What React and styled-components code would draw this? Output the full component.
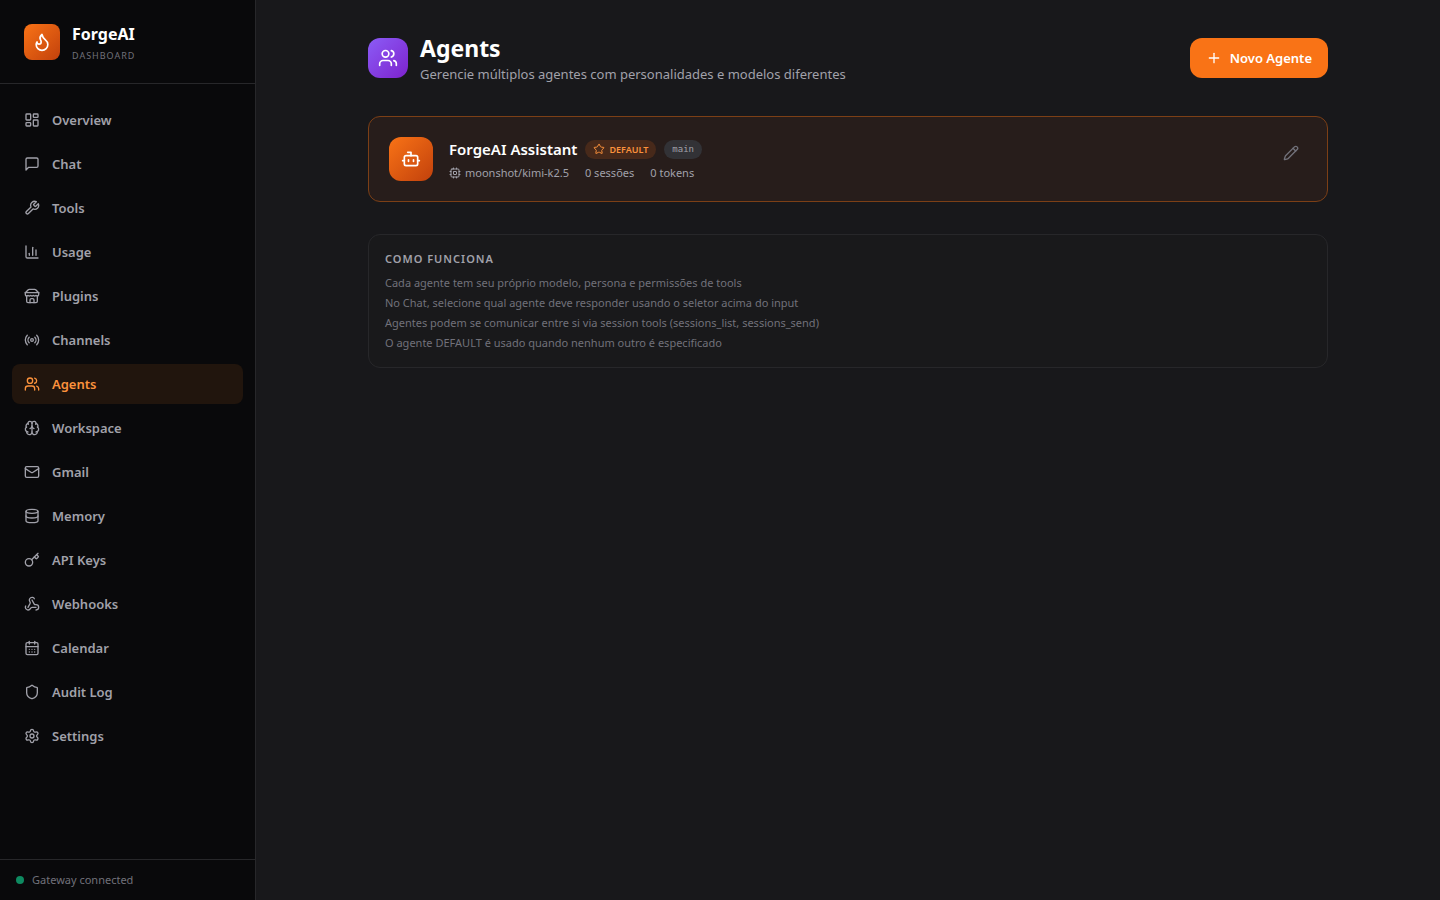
import styled, { createGlobalStyle } from 'styled-components';
import {
    Bot,
    Brain,
    CalendarDays,
    ChartColumn,
    Database,
    Key,
    LayoutDashboard,
    Mail,
    Pencil,
    Plus,
    Radio,
    Settings,
    Shield,
    Star,
    Users,
    Webhook,
} from 'lucide-react';

function Icon({ size = 16, children }) {
    return (
        <svg
            width={size}
            height={size}
            viewBox="0 0 24 24"
            fill="none"
            stroke="currentColor"
            strokeWidth="2"
            strokeLinecap="round"
            strokeLinejoin="round"
            aria-hidden="true"
        >
            {children}
        </svg>
    );
}

function ChatIcon({ size }) {
    return (
        <Icon size={size}>
            <path d="M21 15a2 2 0 0 1-2 2H7l-4 4V5a2 2 0 0 1 2-2h14a2 2 0 0 1 2 2z" />
        </Icon>
    );
}

function WrenchIcon({ size }) {
    return (
        <Icon size={size}>
            <path d="M14.7 6.3a1 1 0 0 0 0 1.4l1.6 1.6a1 1 0 0 0 1.4 0l3.77-3.77a6 6 0 0 1-7.94 7.94l-6.91 6.91a2.12 2.12 0 0 1-3-3l6.91-6.91a6 6 0 0 1 7.94-7.94l-3.76 3.76z" />
        </Icon>
    );
}

function StoreIcon({ size }) {
    return (
        <Icon size={size}>
            <path d="m2 7 4.41-4.41A2 2 0 0 1 7.83 2h8.34a2 2 0 0 1 1.42.59L22 7" />
            <path d="M4 12v8a2 2 0 0 0 2 2h12a2 2 0 0 0 2-2v-8" />
            <path d="M15 22v-4a2 2 0 0 0-2-2h-2a2 2 0 0 0-2 2v4" />
            <path d="M2 7h20" />
            <path d="M22 7v3a2 2 0 0 1-2 2a2.7 2.7 0 0 1-1.59-.63.7.7 0 0 0-.82 0A2.7 2.7 0 0 1 16 12a2.7 2.7 0 0 1-1.59-.63.7.7 0 0 0-.82 0A2.7 2.7 0 0 1 12 12a2.7 2.7 0 0 1-1.59-.63.7.7 0 0 0-.82 0A2.7 2.7 0 0 1 8 12a2.7 2.7 0 0 1-1.59-.63.7.7 0 0 0-.82 0A2.7 2.7 0 0 1 4 12a2 2 0 0 1-2-2V7" />
        </Icon>
    );
}

function FlameIcon({ size }) {
    return (
        <Icon size={size}>
            <path d="M8.5 14.5A2.5 2.5 0 0 0 11 12c0-1.38-.5-2-1-3-1.072-2.143-.224-4.054 2-6 .5 2.5 2 4.9 4 6.5 2 1.6 3 3.5 3 5.5a7 7 0 1 1-14 0c0-1.153.433-2.294 1-3a2.5 2.5 0 0 0 2.5 2.5z" />
        </Icon>
    );
}

function CpuIcon({ size }) {
    return (
        <Icon size={size}>
            <rect width="16" height="16" x="4" y="4" rx="2" />
            <rect width="6" height="6" x="9" y="9" rx="1" />
            <path d="M15 2v2M15 20v2M2 15h2M2 9h2M20 15h2M20 9h2M9 2v2M9 20v2" />
        </Icon>
    );
}

const menu = [
    { label: 'Overview', icon: LayoutDashboard },
    { label: 'Chat', icon: ChatIcon },
    { label: 'Tools', icon: WrenchIcon },
    { label: 'Usage', icon: ChartColumn },
    { label: 'Plugins', icon: StoreIcon },
    { label: 'Channels', icon: Radio },
    { label: 'Agents', icon: Users, active: true },
    { label: 'Workspace', icon: Brain },
    { label: 'Gmail', icon: Mail },
    { label: 'Memory', icon: Database },
    { label: 'API Keys', icon: Key },
    { label: 'Webhooks', icon: Webhook },
    { label: 'Calendar', icon: CalendarDays },
    { label: 'Audit Log', icon: Shield },
    { label: 'Settings', icon: Settings },
];

const tips = [
    'Cada agente tem seu próprio modelo, persona e permissões de tools',
    'No Chat, selecione qual agente deve responder usando o seletor acima do input',
    'Agentes podem se comunicar entre si via session tools (sessions_list, sessions_send)',
    'O agente DEFAULT é usado quando nenhum outro é especificado',
];

function Sidebar() {
    return (
        <StyledSidebar>
            <StyledBrand>
                <StyledIconBox $size="36px" $radius="8px" $from="#f97316" $to="#c2410c">
                    <FlameIcon size={20} />
                </StyledIconBox>
                <div>
                    <StyledBrandName>ForgeAI</StyledBrandName>
                    <StyledBrandSub>DASHBOARD</StyledBrandSub>
                </div>
            </StyledBrand>
            <StyledNav>
                {menu.map(({ label, icon: MenuIcon, active }) => (
                    <StyledNavLink
                        key={label}
                        href={`#${label}`}
                        $active={active}
                        aria-current={active ? 'page' : undefined}
                    >
                        <MenuIcon size={16} />
                        {label}
                    </StyledNavLink>
                ))}
            </StyledNav>
            <StyledStatus>
                <StyledDot />
                Gateway connected
            </StyledStatus>
        </StyledSidebar>
    );
}

function AgentCard() {
    return (
        <StyledCard>
            <StyledIconBox $size="44px" $radius="12px" $from="#f97316" $to="#c2410c">
                <Bot size={20} />
            </StyledIconBox>
            <StyledCardBody>
                <StyledNameRow>
                    <StyledAgentName>ForgeAI Assistant</StyledAgentName>
                    <StyledDefaultBadge>
                        <Star size={12} />
                        DEFAULT
                    </StyledDefaultBadge>
                    <StyledIdBadge>main</StyledIdBadge>
                </StyledNameRow>
                <StyledMeta>
                    <StyledMetaItem>
                        <CpuIcon size={12} />
                        moonshot/kimi-k2.5
                    </StyledMetaItem>
                    <StyledMetaItem>0 sessões</StyledMetaItem>
                    <StyledMetaItem>0 tokens</StyledMetaItem>
                </StyledMeta>
            </StyledCardBody>
            <StyledEditButton type="button" aria-label="Editar agente">
                <Pencil size={16} />
            </StyledEditButton>
        </StyledCard>
    );
}

function App() {
    return (
        <StyledLayout>
            <GlobalStyle />
            <Sidebar />
            <StyledMain>
                <StyledContent>
                    <StyledHeader>
                        <StyledIconBox $size="40px" $radius="12px" $from="#8b5cf6" $to="#7e22ce">
                            <Users size={20} />
                        </StyledIconBox>
                        <StyledHeaderText>
                            <StyledTitle>Agents</StyledTitle>
                            <StyledSubtitle>
                                Gerencie múltiplos agentes com personalidades e modelos diferentes
                            </StyledSubtitle>
                        </StyledHeaderText>
                        <StyledNewButton type="button">
                            <Plus size={16} />
                            Novo Agente
                        </StyledNewButton>
                    </StyledHeader>
                    <AgentCard />
                    <StyledInfo>
                        <StyledInfoTitle>COMO FUNCIONA</StyledInfoTitle>
                        <StyledTips>
                            {tips.map((tip) => (
                                <li key={tip}>{tip}</li>
                            ))}
                        </StyledTips>
                    </StyledInfo>
                </StyledContent>
            </StyledMain>
        </StyledLayout>
    );
}

export default App;

const GlobalStyle = createGlobalStyle`
    * {
        box-sizing: border-box;
        margin: 0;
        padding: 0;
    }
    body {
        background: #18181b;
        color: #ffffff;
        font-family: 'Noto Sans', 'Open Sans', sans-serif;
        font-size: 13px;
        line-height: 20px;
    }
    button {
        border: none;
        font: inherit;
        cursor: pointer;
    }
    svg {
        flex-shrink: 0;
    }
`;

const StyledLayout = styled.div`
    display: flex;
    min-height: 100vh;
`;

const StyledSidebar = styled.aside`
    display: flex;
    flex-direction: column;
    flex-shrink: 0;
    width: 256px;
    background: #09090b;
    border-right: 1px solid #27272a;
`;

const StyledBrand = styled.div`
    display: flex;
    align-items: center;
    gap: 12px;
    padding: 20px 24px;
    border-bottom: 1px solid #27272a;
`;

const StyledIconBox = styled.div`
    display: flex;
    align-items: center;
    justify-content: center;
    flex-shrink: 0;
    width: ${(props) => props.$size};
    height: ${(props) => props.$size};
    border-radius: ${(props) => props.$radius};
    background: linear-gradient(
        to bottom right,
        ${(props) => props.$from},
        ${(props) => props.$to}
    );
`;

const StyledBrandName = styled.p`
    font-size: 16px;
    font-weight: 700;
    line-height: 28px;
`;

const StyledBrandSub = styled.p`
    color: #71717a;
    font-size: 9px;
    line-height: 15px;
    letter-spacing: 1px;
`;

const StyledNav = styled.nav`
    display: flex;
    flex-direction: column;
    flex: 1;
    gap: 4px;
    padding: 16px 12px;
`;

const StyledNavLink = styled.a`
    display: flex;
    align-items: center;
    gap: 12px;
    padding: 10px 12px;
    border-radius: 8px;
    background: ${(props) => (props.$active ? '#21150d' : 'transparent')};
    color: ${(props) => (props.$active ? '#fb923c' : '#a1a1aa')};
    font-weight: 600;
    text-decoration: none;
`;

const StyledStatus = styled.div`
    display: flex;
    align-items: center;
    gap: 8px;
    padding: 12px 16px;
    border-top: 1px solid #27272a;
    color: #71717a;
    font-size: 11px;
    line-height: 16px;
`;

const StyledDot = styled.span`
    width: 8px;
    height: 8px;
    border-radius: 50%;
    background: #0e8a61;
`;

const StyledMain = styled.main`
    flex: 1;
    min-width: 0;
`;

const StyledContent = styled.div`
    display: flex;
    flex-direction: column;
    gap: 32px;
    max-width: 1024px;
    margin: 0 auto;
    padding: 32px;
`;

const StyledHeader = styled.header`
    display: flex;
    align-items: center;
    gap: 12px;
`;

const StyledHeaderText = styled.div`
    flex: 1;
`;

const StyledTitle = styled.h1`
    font-size: 23px;
    font-weight: 700;
    line-height: 32px;
`;

const StyledSubtitle = styled.p`
    color: #a1a1aa;
`;

const StyledNewButton = styled.button`
    display: flex;
    align-items: center;
    gap: 8px;
    padding: 10px 16px;
    border-radius: 12px;
    background: #f97316;
    color: #ffffff;
    font-weight: 600;
`;

const StyledCard = styled.section`
    display: flex;
    align-items: flex-start;
    gap: 16px;
    padding: 20px;
    border: 1px solid #7c3f16;
    border-radius: 12px;
    background: #271d1b;
`;

const StyledCardBody = styled.div`
    flex: 1;
`;

const StyledNameRow = styled.div`
    display: flex;
    align-items: center;
    gap: 8px;
    height: 24px;
`;

const StyledAgentName = styled.h2`
    font-size: 15px;
    font-weight: 600;
    line-height: 24px;
`;

const StyledDefaultBadge = styled.span`
    display: flex;
    align-items: center;
    gap: 4px;
    padding: 2px 8px;
    border-radius: 10px;
    background: #47291a;
    color: #fb923c;
    font-size: 9px;
    font-weight: 600;
    line-height: 15px;
`;

const StyledIdBadge = styled.span`
    padding: 2px 8px;
    border-radius: 10px;
    background: #323236;
    color: #a1a1aa;
    font-family: 'DejaVu Sans Mono', 'Liberation Mono', monospace;
    font-size: 9px;
    line-height: 15px;
`;

const StyledMeta = styled.div`
    display: flex;
    gap: 16px;
    margin-top: 4px;
    color: #a1a1aa;
    font-size: 11px;
    line-height: 16px;
`;

const StyledMetaItem = styled.span`
    display: flex;
    align-items: center;
    gap: 4px;
`;

const StyledEditButton = styled.button`
    display: flex;
    padding: 8px;
    border-radius: 8px;
    background: transparent;
    color: #71717a;
`;

const StyledInfo = styled.section`
    padding: 16px;
    border: 1px solid #27272a;
    border-radius: 12px;
    background: #19191b;
`;

const StyledInfoTitle = styled.h3`
    margin-bottom: 8px;
    color: #a1a1aa;
    font-size: 11px;
    font-weight: 600;
    line-height: 16px;
    letter-spacing: 1px;
`;

const StyledTips = styled.ul`
    display: flex;
    flex-direction: column;
    gap: 4px;
    color: #71717a;
    font-size: 11px;
    line-height: 16px;
    list-style: none;
`;
